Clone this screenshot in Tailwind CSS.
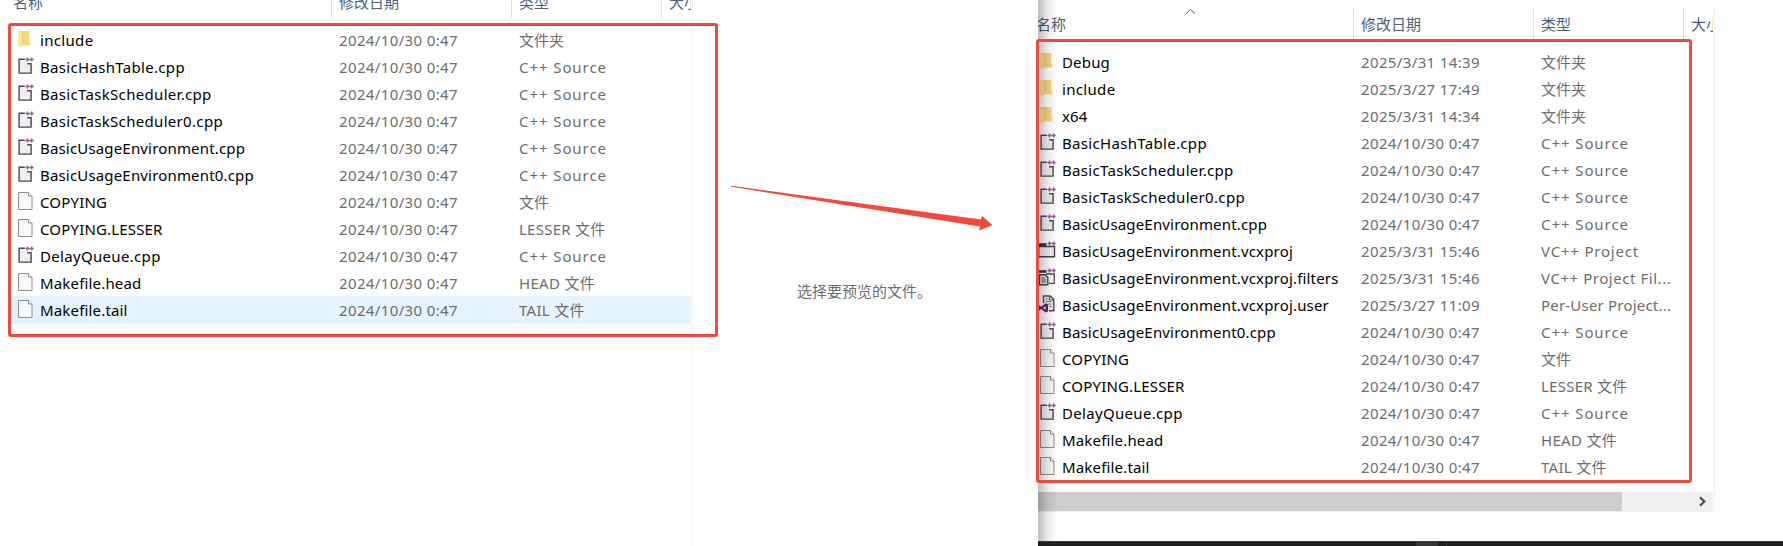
<!DOCTYPE html>
<html lang="zh-CN">
<head>
<meta charset="utf-8">
<title>文件列表</title>
<script src="https://cdn.jsdelivr.net/npm/@tailwindcss/browser@4"></script>
</head>
<body class="bg-white">
<svg class="absolute w-0 h-0" xmlns="http://www.w3.org/2000/svg">
  <defs>
    <linearGradient id="gold" x1="0" x2="1" y1="0" y2="0"><stop offset="0" stop-color="#f2cf74"/><stop offset="1" stop-color="#fbdb84"/></linearGradient>
    <linearGradient id="paper" x1="0" x2="1" y1="0" y2="1"><stop offset="0" stop-color="#f3f3f3"/><stop offset="1" stop-color="#fcfcfc"/></linearGradient>
    <symbol id="plus" viewBox="0 0 20 20"><path d="M9.500 3.500h4M11.500 1.500v4M13.700 3.500h4M15.700 1.500v4" stroke="#9b5a9b" stroke-width="1.500" fill="none"/></symbol>
    <symbol id="folder" viewBox="0 0 20 20"><path d="M3 2h10.500v10.500l.8.800v3.200H3z" fill="url(#gold)"/><path d="M2 2h1.500l2.200 2.500v14.500L2 16.800z" fill="#fde7a6"/></symbol>
    <symbol id="cpp" viewBox="0 0 20 20"><path d="M3 3h6v5h6v9H3z" fill="#efeff2"/><path d="M8.800 3.200H3.100v13.900h12V7.700h-4" fill="none" stroke="#4a4a4c" stroke-width="1.400"/><use href="#plus"/></symbol>
    <symbol id="doc" viewBox="0 0 20 20"><path d="M2.500 1.500h10l3.500 3.500v13.500H2.500z" fill="url(#paper)" stroke="#8e8e8e"/><path d="M12.500 1.500v3.500H16" fill="#fff" stroke="#8e8e8e"/></symbol>
    <symbol id="proj" viewBox="0 0 20 20"><path d="M.7 6.500h15.800v10.300H.7z" fill="#f0f0f1" stroke="#424245" stroke-width="1.400"/><path d="M0 3.200h8.500v3.500H0z" fill="#38383a"/><use href="#plus"/></symbol>
    <symbol id="filters" viewBox="0 0 20 20"><path d="M0 3.200h8.500v2.600H0z" fill="#38383a"/><path d="M8 7h8.300v9.300H11" fill="none" stroke="#4b4b4d" stroke-width="1.300"/><path d="M1.500 7.700h5.500l2.800 2.800v7.300H1.500z" fill="#f0f0f1" stroke="#424245" stroke-width="1.400"/><path d="M3.500 11h3M3.500 13h4.500M3.500 15h4.500" stroke="#424245"/><use href="#plus"/></symbol>
    <symbol id="user" viewBox="0 0 20 20"><path d="M5.500 9V2h6.800L15.800 5.500v11.300H11" fill="#f0f0f1" stroke="#4b4b4d" stroke-width="1.400"/><path d="M11.500 2v4h4" fill="none" stroke="#4b4b4d"/><path d="M7.500 5h3M7.500 7.500h6M9.500 10h4M11 12.500h2.500" stroke="#777"/><path d="M7.500 9.200l2.500 1v7.300l-2.500 1-4.300-3.500L1 16.700l-1-.6v-4.600l1-.5 2.200 1.800zM7.500 12l-2.300 1.900 2.300 1.900z" fill="#68217a" fill-rule="evenodd"/></symbol>
  </defs>
</svg>

<main class="relative flex w-[1783px] h-[546px] overflow-hidden bg-white text-[15px] font-['Noto_Sans','Noto_Sans_CJK_SC',sans-serif]">
  <section class="flex flex-col w-[693px] border-r border-[#f3f3f3]">
    <header class="flex h-[27px] pl-[13px] text-[#4c607a] leading-[20px]">
      <div class="w-[319px] h-[18px] border-r border-[#dfdfdf]"><div class="-mt-[8px]">名称</div></div>
      <div class="w-[180px] h-[18px] border-r border-[#dfdfdf] pl-[7px]"><div class="-mt-[8px]">修改日期</div></div>
      <div class="w-[150px] h-[18px] border-r border-[#dfdfdf] pl-[7px]"><div class="-mt-[8px]">类型</div></div>
      <div class="w-[29px] h-[18px] pl-[7px] overflow-hidden whitespace-nowrap"><div class="-mt-[8px]">大小</div></div>
    </header>
    <div id="source" class="pl-[11px] pr-px"></div>
  </section>

  <section class="flex w-[345px] h-full justify-center pt-[281px] pr-[2px] text-[#6d6d6d] leading-[20px]">选择要预览的文件。</section>

  <section class="relative flex flex-col w-[745px] overflow-hidden">
    <div class="w-[677px] h-[504px] mt-[8px] border-r border-[#f0f0f0]">
      <header class="relative flex h-[41px] text-[#4c607a] leading-[32px]">
        <div class="w-[316px] h-[31px] border-r border-[#dfdfdf] whitespace-nowrap"><div class="-ml-[2px]">名称</div></div>
        <div class="w-[180px] h-[31px] border-r border-[#dfdfdf] pl-[7px]">修改日期</div>
        <div class="w-[150px] h-[31px] border-r border-[#dfdfdf] pl-[7px]">类型</div>
        <div class="w-[29px] h-[31px] pl-[7px] overflow-hidden whitespace-nowrap">大小</div>
        <svg class="absolute left-[147px] top-0 w-[11px] h-[7px]" viewBox="0 0 11 7"><path d="M1 5.700l4.500-4.300L10 5.700" fill="none" stroke="#636363"/></svg>
      </header>
      <div id="target"></div>
      <div class="flex w-[675px] h-[20px] mt-[11px] bg-[#f0f0f0]">
        <div class="w-[584px] h-[19px] bg-[#cdcdcd]"></div>
        <svg class="ml-[76px] mt-[4px] w-[9px] h-[11px]" viewBox="0 0 9 11"><path d="M2 1.200l4.300 4.300L2 9.800" fill="none" stroke="#505050" stroke-width="2.200"/></svg>
      </div>
    </div>
    <div class="flex h-[5px] mt-auto bg-[#1e1f1f] border-t border-[#3a3b3b]"><div class="ml-[378px] w-[22px] bg-[#353638]"></div><div class="ml-[8px] w-px bg-[#3a3b3b]"></div></div>
    <div class="absolute left-0 top-0 w-[20px] h-[541px] bg-linear-to-r from-black/25 via-black/8 to-transparent"></div>
  </section>

  <div class="absolute left-[8px] top-[23px] w-[710px] h-[314px] border-3 border-[#f04a3e] rounded-[3px]"></div>
  <div class="absolute left-[1036px] top-[39px] w-[656px] h-[444px] border-3 border-[#f04a3e] rounded-[3px]"></div>
  <svg class="absolute left-[720px] top-[170px] w-[300px] h-[80px]" viewBox="0 0 300 80"><path d="M11 15.700L261 49.500L262 45.800L272.500 55.300L259 60.500L260 56.500L11 16.700z" fill="#f04a3e"/></svg>
</main>

<script>
const C = 'C++ Source', D = '2024/10/30 0:47';
const source = [
  ['folder','include',D,'文件夹'],['cpp','BasicHashTable.cpp',D,C],['cpp','BasicTaskScheduler.cpp',D,C],
  ['cpp','BasicTaskScheduler0.cpp',D,C],['cpp','BasicUsageEnvironment.cpp',D,C],['cpp','BasicUsageEnvironment0.cpp',D,C],
  ['doc','COPYING',D,'文件'],['doc','COPYING.LESSER',D,'LESSER 文件'],['cpp','DelayQueue.cpp',D,C],
  ['doc','Makefile.head',D,'HEAD 文件'],['doc','Makefile.tail',D,'TAIL 文件']];
const target = [
  ['folder','Debug','2025/3/31 14:39','文件夹'],['folder','include','2025/3/27 17:49','文件夹'],['folder','x64','2025/3/31 14:34','文件夹'],
  ...source.slice(1,5),
  ['proj','BasicUsageEnvironment.vcxproj','2025/3/31 15:46','VC++ Project'],
  ['filters','BasicUsageEnvironment.vcxproj.filters','2025/3/31 15:46','VC++ Project Fil...'],
  ['user','BasicUsageEnvironment.vcxproj.user','2025/3/27 11:09','Per-User Project...'],
  ...source.slice(5)];
const spacing = {
  'C++ Source': 'tracking-[0.92px]', 'VC++ Project': 'tracking-[0.8px]', 'VC++ Project Fil...': 'tracking-[0.55px]',
  'Per-User Project...': 'tracking-[0.2px]', 'LESSER 文件': 'tracking-[0.25px]', 'HEAD 文件': 'tracking-[0.3px]', 'TAIL 文件': 'tracking-[0.3px]'
};
function rows(id, list, pad, selected) {
  document.getElementById(id).innerHTML = list.map(([icon, name, date, type], i) => `
    <div class="flex leading-[26px] whitespace-nowrap ${pad} ${i === selected ? 'h-[28px] -mt-px pt-px bg-[#e5f3ff]' : 'h-[27px]'}">
      <svg class="w-[20px] h-[20px] mt-[2px] mr-[4px] shrink-0" viewBox="0 0 20 20"><use href="#${icon}"/></svg>
      <div class="w-[299px] text-black ${/Task|Hash|Delay|include/.test(name) ? 'tracking-[0.32px]' : 'tracking-[0.17px]'}">${name}</div>
      <div class="w-[180px] text-[#6d6d6d] tracking-[0.37px]">${date}</div>
      <div class="text-[#6d6d6d] ${spacing[type] || ''}">${type}</div>
    </div>`).join('');
}
rows('source', source, 'pl-[5px]', 10);
rows('target', target, '', -1);
</script>
</body>
</html>
